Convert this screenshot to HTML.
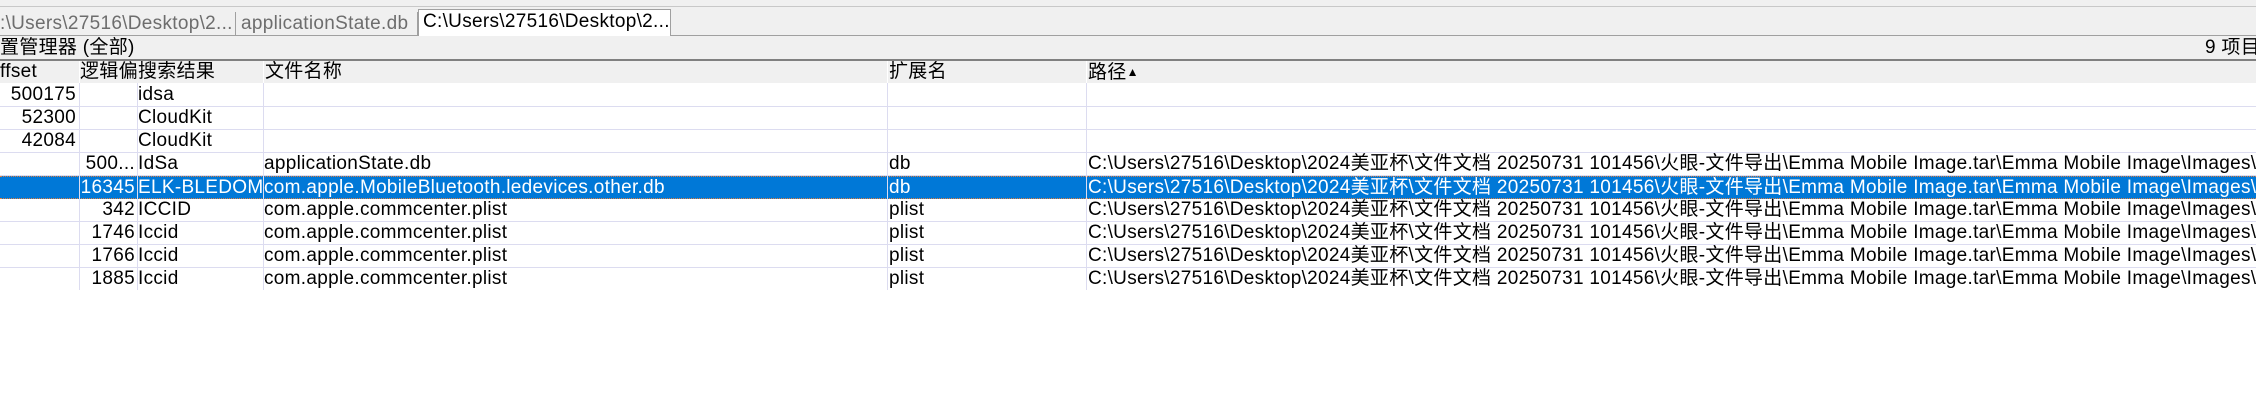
<!DOCTYPE html>
<html><head><meta charset="utf-8"><style>
*{margin:0;padding:0;box-sizing:border-box}
body{width:2256px;height:406px;background:#fff;position:relative;overflow:hidden;font-family:"Liberation Sans","Noto Sans CJK SC",sans-serif;font-size:19px;letter-spacing:0.3px;color:#000}
.a{position:absolute;white-space:nowrap}
.row{position:absolute;left:0;width:2256px;height:23px;border-bottom:1px solid #dcdcf0}
.c{position:absolute;top:0;height:22px;line-height:22px;white-space:nowrap;overflow:hidden}
.vl{position:absolute;top:83px;height:207px;width:1px;background:#dcdcf0}
.sel{background:#0078d7;color:#fff;border-top:1px dotted #e08040;border-bottom:1px dotted #e08040}
</style></head><body>
<div class="a" style="left:0;top:0;width:2256px;height:7px;background:#f0f0f0;border-bottom:1px solid #c8c8c8"></div>
<div class="a" style="left:0;top:7px;width:2256px;height:53px;background:#f0f0f0"></div>
<div class="a" style="left:0;top:35px;width:2256px;height:1px;background:#a0a0a0"></div>
<div class="a" style="left:0;top:12px;width:236px;height:23px;border-right:1px solid #a0a0a0;color:#6d6d6d;line-height:23px;overflow:hidden">:\Users\27516\Desktop\2...</div>
<div class="a" style="left:237px;top:12px;width:181px;height:23px;border-right:1px solid #a0a0a0;color:#6d6d6d;line-height:23px;padding-left:4px;overflow:hidden">applicationState.db</div>
<div class="a" style="left:418px;top:9px;width:253px;height:27px;background:#fff;border:1px solid #a0a0a0;border-bottom:none;line-height:24px;padding-left:4px;overflow:hidden">C:\Users\27516\Desktop\2...</div>
<div class="a" style="left:0;top:36px;line-height:23px">置管理器 (全部)</div>
<div class="a" style="right:-4px;top:36px;line-height:23px">9 项目</div>
<div class="a" style="left:0;top:59px;width:2256px;height:2px;background:#808080"></div>
<div class="a" style="left:0;top:61px;width:2256px;height:22px;background:#f0f0f0"></div>
<div class="a" style="left:0;top:61px;line-height:22px">ffset</div>
<div class="a" style="left:80px;top:61px;line-height:22px;width:57px;overflow:hidden">逻辑偏</div>
<div class="a" style="left:138px;top:61px;line-height:22px">搜索结果</div>
<div class="a" style="left:265px;top:61px;line-height:22px">文件名称</div>
<div class="a" style="left:889px;top:61px;line-height:22px">扩展名</div>
<div class="a" style="left:1088px;top:61px;line-height:22px">路径<span style="font-size:12px;vertical-align:2px">▲</span></div>
<div class="a" style="left:79px;top:61px;width:1px;height:22px;background:#fff"></div>
<div class="a" style="left:263px;top:61px;width:1px;height:22px;background:#fff"></div>
<div class="a" style="left:887px;top:61px;width:1px;height:22px;background:#fff"></div>
<div class="a" style="left:1086px;top:61px;width:1px;height:22px;background:#fff"></div>

<div class="row" style="top:84px"><div class="c" style="right:2180px">500175</div><div class="c" style="left:138px">idsa</div></div>
<div class="row" style="top:107px"><div class="c" style="right:2180px">52300</div><div class="c" style="left:138px">CloudKit</div></div>
<div class="row" style="top:130px"><div class="c" style="right:2180px">42084</div><div class="c" style="left:138px">CloudKit</div></div>
<div class="row" style="top:153px"><div class="c" style="right:2121px">500...</div><div class="c" style="left:138px">IdSa</div><div class="c" style="left:264px">applicationState.db</div><div class="c" style="left:889px">db</div><div class="c" style="left:1088px">C:\Users\27516\Desktop\2024美亚杯\文件文档 20250731 101456\火眼-文件导出\Emma Mobile Image.tar\Emma Mobile Image\Images\</div></div>
<div class="row sel" style="top:176px;height:23px"><div class="c" style="right:2121px">16345</div><div class="c" style="left:138px;width:125px">ELK-BLEDOM</div><div class="c" style="left:264px">com.apple.MobileBluetooth.ledevices.other.db</div><div class="c" style="left:889px">db</div><div class="c" style="left:1088px">C:\Users\27516\Desktop\2024美亚杯\文件文档 20250731 101456\火眼-文件导出\Emma Mobile Image.tar\Emma Mobile Image\Images\</div></div>
<div class="row" style="top:199px"><div class="c" style="right:2121px">342</div><div class="c" style="left:138px">ICCID</div><div class="c" style="left:264px">com.apple.commcenter.plist</div><div class="c" style="left:889px">plist</div><div class="c" style="left:1088px">C:\Users\27516\Desktop\2024美亚杯\文件文档 20250731 101456\火眼-文件导出\Emma Mobile Image.tar\Emma Mobile Image\Images\</div></div>
<div class="row" style="top:222px"><div class="c" style="right:2121px">1746</div><div class="c" style="left:138px">Iccid</div><div class="c" style="left:264px">com.apple.commcenter.plist</div><div class="c" style="left:889px">plist</div><div class="c" style="left:1088px">C:\Users\27516\Desktop\2024美亚杯\文件文档 20250731 101456\火眼-文件导出\Emma Mobile Image.tar\Emma Mobile Image\Images\</div></div>
<div class="row" style="top:245px"><div class="c" style="right:2121px">1766</div><div class="c" style="left:138px">Iccid</div><div class="c" style="left:264px">com.apple.commcenter.plist</div><div class="c" style="left:889px">plist</div><div class="c" style="left:1088px">C:\Users\27516\Desktop\2024美亚杯\文件文档 20250731 101456\火眼-文件导出\Emma Mobile Image.tar\Emma Mobile Image\Images\</div></div>
<div class="row" style="top:268px;border-bottom:none"><div class="c" style="right:2121px">1885</div><div class="c" style="left:138px">Iccid</div><div class="c" style="left:264px">com.apple.commcenter.plist</div><div class="c" style="left:889px">plist</div><div class="c" style="left:1088px">C:\Users\27516\Desktop\2024美亚杯\文件文档 20250731 101456\火眼-文件导出\Emma Mobile Image.tar\Emma Mobile Image\Images\</div></div>
<div class="vl" style="left:79px"></div>
<div class="vl" style="left:137px"></div>
<div class="vl" style="left:263px"></div>
<div class="vl" style="left:887px"></div>
<div class="vl" style="left:1086px"></div>
</body></html>
